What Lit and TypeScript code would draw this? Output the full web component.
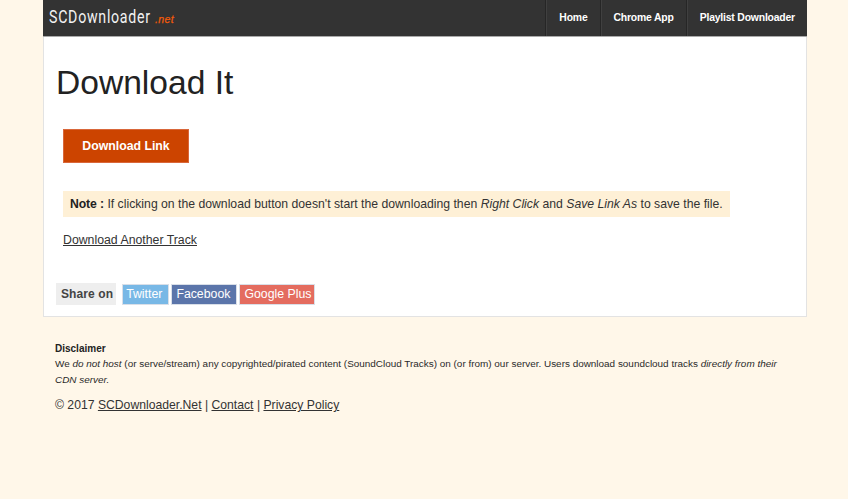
import { LitElement, html, css } from "lit";
import { customElement } from "lit/decorators.js";

@customElement("app-root")
export class AppRoot extends LitElement {
  static styles = css`
    :host {
      display: block;
      min-height: 499px;
      background: #fff7e9;
      font-family: "Liberation Sans", Arial, sans-serif;
      color: #222;
    }
    a { color: inherit; text-decoration: underline; }
    .wrap { width: 764px; margin-left: 43px; }
    .nav {
      height: 36px;
      background: #333;
      border-bottom: 1px solid #aaa;
      display: flex;
      justify-content: space-between;
      color: #fff;
    }
    .logo {
      padding-left: 6px;
      line-height: 35px;
      display: flex;
      gap: 5px;
    }
    .logo b {
      display: block;
      width: 101px;
      font-family: "Roboto", sans-serif;
      font-size: 17.5px;
      font-weight: 400;
      letter-spacing: 0.9px;
      color: #f2f2f2;
      transform: scaleX(0.81);
      transform-origin: left center;
      white-space: nowrap;
    }
    .logo i {
      font-family: "Liberation Sans", sans-serif;
      font-size: 10.5px;
      font-weight: normal;
      color: #f25a0a;
      -webkit-text-stroke: 0.25px #f25a0a;
      letter-spacing: 0.4px;
      padding-top: 2px;
    }
    .menu { display: flex; }
    .menu a {
      text-decoration: none;
      font-size: 10.4px;
      letter-spacing: -0.18px;
      font-weight: bold;
      line-height: 35px;
      padding: 0 12px 0 13px;
      border-left: 1px solid #262626;
      box-shadow: inset 1px 0 0 #404040;
    }
    .panel {
      background: #fff;
      border: 1px solid #e3e3e3;
      border-top: 0;
      height: 280px;
      box-sizing: border-box;
      padding: 0 12px;
    }
    h1 {
      margin: 0;
      padding-top: 25px;
      font-size: 33.6px;
      line-height: 41px;
      font-weight: normal;
      color: #222;
    }
    .dl {
      display: inline-block;
      margin: 26px 0 0 7px;
      width: 126px;
      height: 34px;
      box-sizing: border-box;
      background: #cc4400;
      border: 1px solid #d9673a;
      color: #fff;
      font-size: 12.3px;
      font-weight: bold;
      line-height: 32px;
      text-align: center;
      text-decoration: none;
    }
    .note {
      margin: 28px 0 0 7px;
      width: fit-content;
      background: #fef0d6;
      padding: 0 7px;
      font-size: 12.22px;
      line-height: 26px;
      color: #333;
    }
    .note b { color: #222; letter-spacing: -0.1px; }
    .another { display: block; margin: 16px 0 0 7px; font-size: 12.3px; line-height: 15px; color: #333; width: fit-content; }
    .share { display: flex; margin-top: 35px; gap: 2px; align-items: flex-end; }
    .share span, .share a {
      height: 21px;
      box-sizing: border-box;
      font-size: 12.3px;
      line-height: 19px;
      text-decoration: none;
      color: #fff;
      border: 1px solid #d9dfe8;
    }
    .share span {
      height: 22px;
      line-height: 20px;
      background: #eee;
      border-color: #eee;
      color: #444;
      font-weight: bold;
      font-size: 12px;
      letter-spacing: 0.1px;
      padding: 0 2px 0 4px;
      margin-right: 4px;
    }
    .share .tw { background: #78b8e6; padding: 0 6px 0 3px; }
    .share .fb { background: #5b75aa; padding: 0 6px 0 4px; }
    .share .gp { background: #e46c5f; padding: 0 2.5px 0 4px; }
    .foot { padding: 25px 12px 0; color: #222; }
    .foot h4 { margin: 0; font-size: 10px; line-height: 13px; font-weight: bold; }
    .foot p { margin: 0; font-size: 9.94px; line-height: 16px; padding-top: 1px; color: #2a2a2a; }
    .copy { margin-top: 10px; font-size: 12.2px; line-height: 15px; color: #333; }
  `;

  render() {
    return html`
      <div class="wrap">
        <div class="nav">
          <div class="logo"><b>SCDownloader</b> <i>.net</i></div>
          <div class="menu">
            <a href="#">Home</a>
            <a href="#">Chrome App</a>
            <a href="#">Playlist Downloader</a>
          </div>
        </div>
        <div class="panel">
          <h1>Download It</h1>
          <a class="dl" href="#">Download Link</a>
          <div class="note">
            <b>Note :</b> If clicking on the download button doesn't start the downloading then
            <em>Right Click</em> and <em>Save Link As</em> to save the file.
          </div>
          <a class="another" href="#">Download Another Track</a>
          <div class="share">
            <span>Share on</span>
            <a class="tw" href="#">Twitter</a>
            <a class="fb" href="#">Facebook</a>
            <a class="gp" href="#">Google Plus</a>
          </div>
        </div>
        <div class="foot">
          <h4>Disclaimer</h4>
          <p>
            We <em>do not host</em> (or serve/stream) any copyrighted/pirated content (SoundCloud Tracks) on (or from)
            our server. Users download soundcloud tracks <em>directly from their</em> <em>CDN server.</em>
          </p>
          <div class="copy">
            © 2017 <a href="#">SCDownloader.Net</a> | <a href="#">Contact</a> | <a href="#">Privacy Policy</a>
          </div>
        </div>
      </div>
    `;
  }
}
